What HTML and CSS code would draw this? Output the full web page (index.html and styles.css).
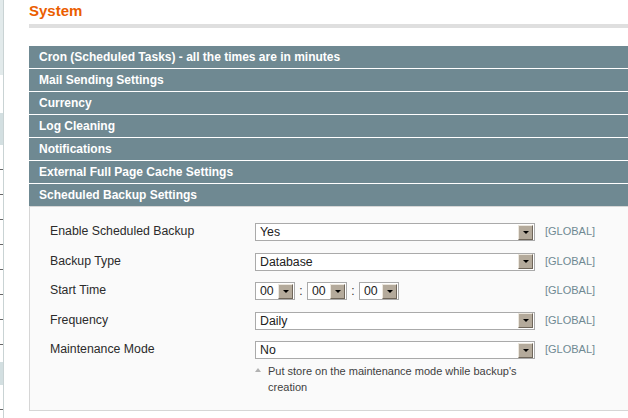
FILE: index.html
```html
<!DOCTYPE html>
<html>
<head>
<meta charset="utf-8">
<title>System</title>
<link rel="stylesheet" href="styles.css">
</head>
<body>
<div class="page">
  <aside class="side">
    <div class="side-top"></div>
    <div class="side-plain side-plain-a"></div>
    <div class="side-tab side-tab-a"></div>
    <div class="side-list side-list-a"></div>
    <div class="side-tab side-tab-b"></div>
    <div class="side-list side-list-b"></div>
  </aside>
  <main class="main">
    <div class="content-header">
      <h3 class="title">System</h3>
    </div>
    <div class="sections">
      <div class="bar">Cron (Scheduled Tasks) - all the times are in minutes</div>
      <div class="bar">Mail Sending Settings</div>
      <div class="bar">Currency</div>
      <div class="bar">Log Cleaning</div>
      <div class="bar">Notifications</div>
      <div class="bar">External Full Page Cache Settings</div>
      <div class="bar">Scheduled Backup Settings</div>
      <div class="fieldset">
        <div class="form">
          <div class="label">Enable Scheduled Backup</div>
          <div class="value">
            <div class="select"><span class="sel-text">Yes</span><span class="sel-btn"></span></div>
          </div>
          <div class="scope">[GLOBAL]</div>

          <div class="label">Backup Type</div>
          <div class="value">
            <div class="select"><span class="sel-text">Database</span><span class="sel-btn"></span></div>
          </div>
          <div class="scope">[GLOBAL]</div>

          <div class="label">Start Time</div>
          <div class="value time">
            <div class="select small"><span class="sel-text">00</span><span class="sel-btn"></span></div>
            <span class="colon">:</span>
            <div class="select small"><span class="sel-text">00</span><span class="sel-btn"></span></div>
            <span class="colon">:</span>
            <div class="select small"><span class="sel-text">00</span><span class="sel-btn"></span></div>
          </div>
          <div class="scope">[GLOBAL]</div>

          <div class="label">Frequency</div>
          <div class="value">
            <div class="select"><span class="sel-text">Daily</span><span class="sel-btn"></span></div>
          </div>
          <div class="scope">[GLOBAL]</div>

          <div class="label">Maintenance Mode</div>
          <div class="value">
            <div class="select"><span class="sel-text">No</span><span class="sel-btn"></span></div>
            <p class="note">Put store on the maintenance mode while backup's creation</p>
          </div>
          <div class="scope">[GLOBAL]</div>
        </div>
      </div>
    </div>
  </main>
</div>
</body>
</html>
```

FILE: styles.css
```css
html, body {
  margin: 0;
  padding: 0;
  background: #fff;
}
body {
  font-family: "Liberation Sans", Arial, sans-serif;
  font-size: 12px;
  color: #2f2f2f;
  overflow: hidden;
}
.page {
  display: flex;
  width: 628px;
  height: 418px;
  overflow: hidden;
}

/* left navigation remnant */
.side {
  width: 3px;
  flex: 0 0 3px;
  border-right: 1px solid #c9d3d4;
  display: flex;
  flex-direction: column;
}
.side-top {
  height: 75px;
  background: #e2eaeb;
}
.side-plain-a {
  height: 38px;
  background: #fff;
}
.side-tab {
  background: #d3dfe1;
}
.side-tab-a { height: 32px; }
.side-tab-b { height: 23px; }
.side-list {
  background-color: #fff;
  background-image: repeating-linear-gradient(to bottom, transparent 0, transparent 24px, #666 24px, #666 25px);
  background-size: 3px 25px;
  background-repeat: repeat-y;
  background-position: 0 0;
}
.side-list-a {
  height: 217px;
}
.side-list-b {
  flex: 1;
}

.main {
  flex: 1;
  margin-left: 25px;
  min-width: 0;
}
.content-header {
  border-bottom: 4px solid #dfdfdf;
  padding-top: 1px;
  height: 23px;
  margin-right: -10px;
}
.title {
  margin: 0;
  font-size: 15px;
  line-height: 20px;
  font-weight: bold;
  color: #eb5e00;
}
.sections {
  margin-top: 18px;
  margin-right: -10px;
}
.bar {
  height: 22px;
  line-height: 22px;
  margin-bottom: 1px;
  padding-left: 10px;
  background: #6f8992;
  color: #fff;
  font-weight: bold;
  font-size: 12px;
  white-space: nowrap;
}
.fieldset {
  margin-top: -1px;
  border: 1px solid #d6d6d6;
  background: #fafafa;
  padding: 16px 0 15px 20px;
}
.form {
  display: grid;
  grid-template-columns: 205px 280px auto;
  row-gap: 11.6px;
  align-items: start;
}
.label {
  font-size: 12.3px;
  line-height: 17px;
  color: #2b2b2b;
  white-space: nowrap;
}
.value {
  display: block;
}
.value.time {
  display: flex;
  align-items: center;
}
.select {
  position: relative;
  box-sizing: border-box;
  height: 18px;
  border: 1px solid #aaa;
  background: #fff;
  display: flex;
  align-items: center;
  justify-content: space-between;
}
.select.small {
  width: 40px;
}
.sel-text {
  padding-left: 4px;
  font-size: 12.3px;
  color: #222;
  line-height: 16px;
}
.sel-btn {
  box-sizing: border-box;
  width: 15px;
  height: 15px;
  margin-right: 1px;
  background: #b4aa9b;
  border-top: 1px solid #ece7de;
  border-left: 1px solid #ece7de;
  border-right: 1px solid #6f665a;
  border-bottom: 1px solid #6f665a;
  display: flex;
  align-items: center;
  justify-content: center;
}
.sel-btn::after {
  content: "";
  width: 0;
  height: 0;
  border-left: 3px solid transparent;
  border-right: 3px solid transparent;
  border-top: 3px solid #000;
}
.colon {
  width: 12px;
  text-align: center;
  color: #333;
}
.scope {
  padding-left: 10px;
  font-size: 11px;
  line-height: 16px;
  color: #6f8992;
  white-space: nowrap;
}
.note {
  position: relative;
  margin: 4px 0 0;
  padding-left: 13px;
  font-size: 11px;
  line-height: 16px;
  color: #3f3f3f;
}
.note::before {
  content: "";
  position: absolute;
  left: 0;
  top: 5px;
  width: 0;
  height: 0;
  border-left: 3px solid transparent;
  border-right: 3px solid transparent;
  border-bottom: 4px solid #b2b2b2;
}
```
